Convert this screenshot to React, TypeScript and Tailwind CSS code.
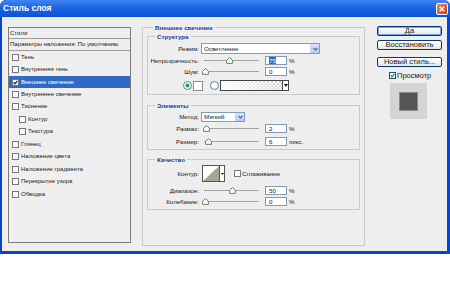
import React from 'react';

interface ListItem {
  label: string;
  checked?: boolean;
  selected?: boolean;
  indent?: boolean;
}

const styleItems: ListItem[] = [
  { label: 'Тень' },
  { label: 'Внутренняя тень' },
  { label: 'Внешнее свечение', checked: true, selected: true },
  { label: 'Внутреннее свечение' },
  { label: 'Тиснение' },
  { label: 'Контур', indent: true },
  { label: 'Текстура', indent: true },
  { label: 'Глянец' },
  { label: 'Наложение цвета' },
  { label: 'Наложение градиента' },
  { label: 'Перекрытие узора' },
  { label: 'Обводка' },
];

// small XP-like checkbox
const CheckBox = ({ checked = false, green = false }: { checked?: boolean; green?: boolean }) => (
  <svg width="7" height="7" viewBox="0 0 7 7" className="shrink-0">
    <rect x="0.5" y="0.5" width="6" height="6" fill="#fbfbfb" stroke={green ? '#1c5180' : '#777'} />
    {checked && (
      <path d="M1.6 3.4 L2.9 4.8 L5.4 1.9" fill="none" stroke={green ? '#21a121' : '#222'} strokeWidth="1.3" />
    )}
  </svg>
);

const Radio = ({ checked = false }: { checked?: boolean }) => (
  <svg width="9" height="9" viewBox="0 0 9 9" className="shrink-0">
    <circle cx="4.5" cy="4.5" r="4" fill="#fbfbfb" stroke="#5a7fa8" />
    {checked && <circle cx="4.5" cy="4.5" r="2" fill="#2aa52a" />}
  </svg>
);

const ComboArrow = () => (
  <div className="w-[9px] h-full bg-gradient-to-b from-[#dbe6fe] to-[#b4c8f6] border-l border-[#c6d5f7] flex items-center justify-center">
    <svg width="5" height="4" viewBox="0 0 5 4">
      <path d="M0.5 0.8 L2.5 2.8 L4.5 0.8" fill="none" stroke="#4d6185" strokeWidth="1.2" />
    </svg>
  </div>
);

const Slider = ({ pos }: { pos: number }) => (
  <div className="relative w-[55px] h-[9px] ml-[5px] shrink-0">
    <div className="absolute left-0 right-0 top-[4px] h-[1px] bg-[#a3a3a3]" />
    <svg width="7" height="7" viewBox="0 0 7 7" className="absolute top-[1px]" style={{ left: pos - 3 }}>
      <path d="M3.5 0.6 L6.4 3.2 L6.4 6.4 L0.6 6.4 L0.6 3.2 Z" fill="#fdfdfd" stroke="#5f8a5f" />
    </svg>
  </div>
);

const NumInput = ({ value, selected = false }: { value: string; selected?: boolean }) => (
  <div className="w-[22px] h-[9px] ml-[6px] border border-[#7f9db9] bg-white flex items-center pl-[3px] shrink-0">
    <span className={selected ? 'bg-[#316ac5] text-white leading-[7px]' : 'leading-[7px]'}>{value}</span>
  </div>
);

const SliderRow = ({ label, pos, value, unit, selected, className }: {
  label: string; pos: number; value: string; unit: string; selected?: boolean; className?: string;
}) => (
  <div className={`flex items-center h-[9px] ${className ?? ''}`}>
    <div className="w-[51px] text-right whitespace-nowrap">{label}</div>
    <Slider pos={pos} />
    <NumInput value={value} selected={selected} />
    <span className="ml-[2px]">{unit}</span>
  </div>
);

const GroupLabel = ({ children, className }: { children: React.ReactNode; className?: string }) => (
  <div className={`-mt-[5px] w-fit px-[2px] bg-[#eeeeee] text-[#1b3d96] font-bold leading-[9px] whitespace-nowrap ${className ?? ''}`}>
    {children}
  </div>
);

const XpButton = ({ children, primary = false, className }: { children: React.ReactNode; primary?: boolean; className?: string }) => (
  <div
    className={`h-[10px] w-[65px] rounded-[2px] border border-[#003c74] bg-gradient-to-b from-white to-[#e6e5df] flex items-center justify-center leading-none ${
      primary ? 'ring-1 ring-inset ring-[#7aa2e6]' : ''
    } ${className ?? ''}`}
  >
    {children}
  </div>
);

export default function App() {
  return (
    <div className="w-[450px] h-[290px] bg-white font-['Liberation_Sans',Arial,sans-serif] text-[#1a1a1a] overflow-hidden">
      <div className="h-[254px] flex flex-col rounded-t-[6px] bg-[#0b43cb]">
        {/* title bar */}
        <div className="h-[17px] shrink-0 flex items-center justify-between pl-[3px] pr-[2px] rounded-t-[6px] bg-gradient-to-b from-[#3f86f2] via-[#1862e2] to-[#0c52d8]">
          <span className="text-white font-bold text-[8.5px] leading-none">Стиль слоя</span>
          <div className="w-[12px] h-[12px] rounded-[2px] border border-white bg-gradient-to-br from-[#ea8462] to-[#c73b17] flex items-center justify-center">
            <svg width="6" height="6" viewBox="0 0 6 6">
              <path d="M0.8 0.8 L5.2 5.2 M5.2 0.8 L0.8 5.2" stroke="white" strokeWidth="1.4" />
            </svg>
          </div>
        </div>

        {/* body */}
        <div className="flex-1 ml-[2px] mr-[3px] mb-[3px] bg-[#eeeeee] flex items-start">
          {/* styles list */}
          <div className="mt-[10px] ml-[6px] w-[123px] h-[216px] border border-[#7c7c7c] bg-[#efefef] text-[6px] shrink-0">
            <div className="h-[11px] border-b border-[#9c9c9c] flex items-center pl-[1px]">Стили</div>
            <div className="h-[12px] border-b border-[#9c9c9c] flex items-center pl-[1px] whitespace-nowrap">
              Параметры наложения: По умолчанию
            </div>
            {styleItems.map((item) => (
              <div
                key={item.label}
                className={`h-[12.45px] flex items-center gap-[2px] whitespace-nowrap ${item.indent ? 'pl-[10px]' : 'pl-[3px]'} ${
                  item.selected ? 'bg-[#316ac5] text-white' : ''
                }`}
              >
                <CheckBox checked={item.checked} />
                <span>{item.label}</span>
              </div>
            ))}
          </div>

          {/* Внешнее свечение */}
          <div className="mt-[10px] ml-[11px] w-[223px] h-[219px] border border-[#cbcbcb] px-[4px] text-[6.2px] shrink-0">
            <GroupLabel className="ml-[6px]">Внешнее свечение</GroupLabel>

            {/* Структура */}
            <div className="mt-[4px] border border-[#cbcbcb] pb-[3px]">
              <GroupLabel className="ml-[7px]">Структура</GroupLabel>
              <div className="mt-[2px] flex items-center h-[11px]">
                <div className="w-[51px] text-right">Режим:</div>
                <div className="ml-[2px] w-[119px] h-[11px] border border-[#7f9db9] bg-white flex items-center justify-between">
                  <span className="pl-[2px]">Осветление</span>
                  <ComboArrow />
                </div>
              </div>
              <SliderRow className="mt-[2px]" label="Непрозрачность:" pos={25} value="75" unit="%" selected />
              <SliderRow className="mt-[2px]" label="Шум:" pos={1} value="0" unit="%" />
              <div className="mt-[4px] h-[11px] flex items-center pl-[35px]">
                <Radio checked />
                <div className="ml-[1px] w-[10px] h-[10px] border border-[#8a8a8a] bg-white" />
                <div className="ml-[7px]">
                  <Radio />
                </div>
                <div className="ml-[1px] w-[69px] h-[11px] border border-[#444] flex">
                  <div className="flex-1 bg-[image:linear-gradient(to_right,#ffffff,rgba(255,255,255,0)),repeating-conic-gradient(#cfcfcf_0_25%,#ffffff_0_50%)] bg-[length:100%_100%,4px_4px]" />
                  <div className="w-[6px] border-l border-[#444] bg-white flex items-center justify-center">
                    <svg width="4" height="3" viewBox="0 0 4 3">
                      <path d="M0 0 L4 0 L2 3 Z" fill="#111" />
                    </svg>
                  </div>
                </div>
              </div>
            </div>

            {/* Элементы */}
            <div className="mt-[10px] border border-[#cbcbcb] pb-[3px]">
              <GroupLabel className="ml-[7px]">Элементы</GroupLabel>
              <div className="mt-[2px] flex items-center h-[10px]">
                <div className="w-[51px] text-right">Метод:</div>
                <div className="ml-[2px] w-[44px] h-[10px] border border-[#7f9db9] bg-white flex items-center justify-between">
                  <span className="pl-[2px]">Мягкий</span>
                  <ComboArrow />
                </div>
              </div>
              <SliderRow className="mt-[2px]" label="Размах:" pos={2} value="2" unit="%" />
              <SliderRow className="mt-[4px]" label="Размер:" pos={4} value="6" unit="пикс." />
            </div>

            {/* Качество */}
            <div className="mt-[9px] border border-[#cbcbcb] pb-[3px]">
              <GroupLabel className="ml-[7px]">Качество</GroupLabel>
              <div className="mt-[1px] flex items-center h-[17px]">
                <div className="w-[51px] text-right">Контур:</div>
                <div className="ml-[3px] flex h-[17px] border border-[#555]">
                  <svg width="16" height="15" viewBox="0 0 16 15" className="bg-white">
                    <path d="M16 0 L16 15 L0 15 Z" fill="#a9a592" />
                  </svg>
                  <div className="w-[5px] border-l border-[#555] bg-white flex items-center justify-center">
                    <svg width="3" height="2" viewBox="0 0 3 2">
                      <path d="M0 0 L3 0 L1.5 2 Z" fill="#111" />
                    </svg>
                  </div>
                </div>
                <div className="ml-[9px] flex items-center gap-[1px]">
                  <CheckBox />
                  <span>Сглаживание</span>
                </div>
              </div>
              <SliderRow className="mt-[4px]" label="Диапазон:" pos={28} value="50" unit="%" />
              <SliderRow className="mt-[2px]" label="Колебание:" pos={1} value="0" unit="%" />
            </div>
          </div>

          {/* right column */}
          <div className="mt-[9px] ml-[12px] w-[65px] flex flex-col text-[7.5px] shrink-0">
            <XpButton primary>Да</XpButton>
            <XpButton className="mt-[4px]">Восстановить</XpButton>
            <XpButton className="mt-[7px]">Новый стиль...</XpButton>
            <div className="mt-[5px] h-[7px] flex items-center pl-[12px] gap-[1px]">
              <CheckBox checked green />
              <span className="leading-none">Просмотр</span>
            </div>
            <div className="mt-[4px] ml-[13px] w-[37px] h-[36px] bg-[#d4d4d4] flex items-center justify-center">
              <div className="w-[19px] h-[19px] bg-[#555555] border border-[#8a8a8a]" />
            </div>
          </div>
        </div>
      </div>
    </div>
  );
}
